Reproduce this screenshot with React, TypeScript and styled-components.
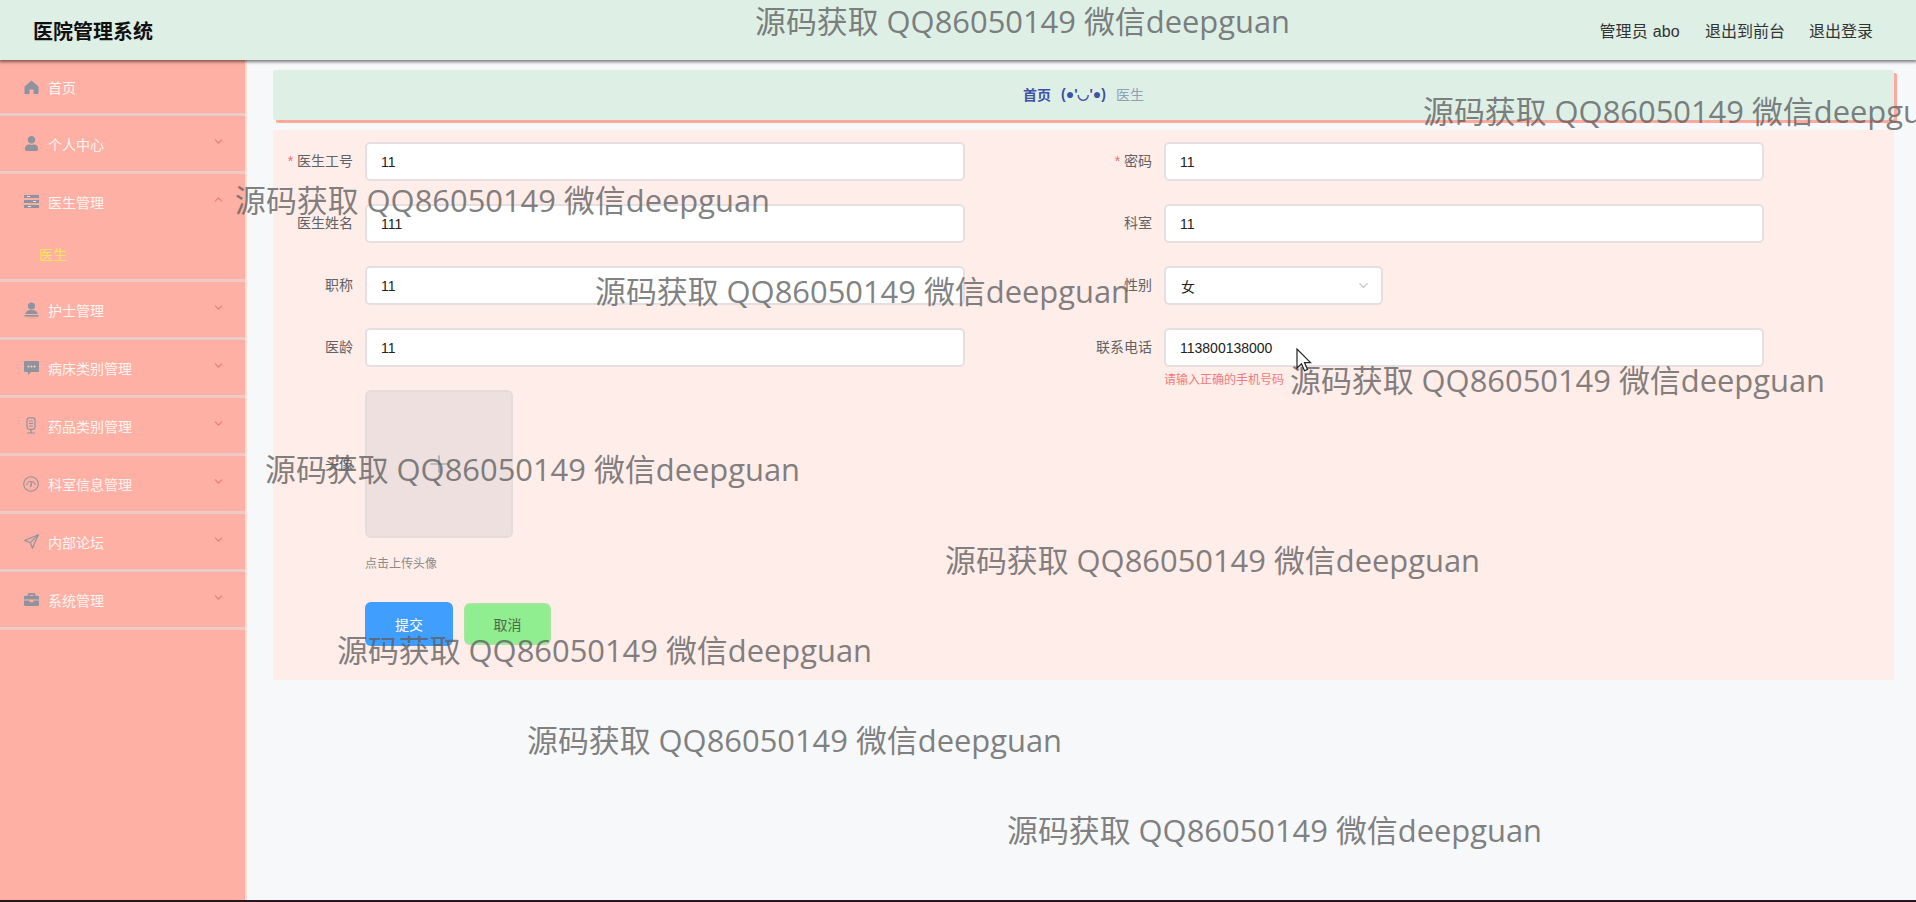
import React from 'react';
import styled, { createGlobalStyle } from 'styled-components';
import { FaUser, FaBriefcase } from 'react-icons/fa';
import { ChevronDown, ChevronUp, Plus } from 'lucide-react';

const FONT = `"Liberation Sans", "Noto Sans CJK SC", sans-serif`;

const GlobalStyle = createGlobalStyle`
  html, body {
    margin: 0;
    padding: 0;
    height: 100%;
    overflow: hidden;
    font-family: ${FONT};
  }
  * { box-sizing: border-box; }
`;

const Page = styled.div`
  position: relative;
  display: flex;
  flex-direction: column;
  height: 902px;
  overflow: hidden;
  background: #f7f8fa;
`;

const TopBar = styled.header`
  position: relative;
  z-index: 2;
  display: flex;
  align-items: center;
  justify-content: space-between;
  flex: none;
  height: 60px;
  padding: 0 43px 0 33px;
  background: #deefe6;
  box-shadow: 0 1px 3px 1px #00000080;
`;

const Title = styled.h1`
  margin: 0;
  font-size: 20px;
  font-weight: 700;
  color: #111;
`;

const TopLinks = styled.nav`
  display: flex;
  align-items: center;
  gap: 24px;
  font-size: 16px;
  color: #333;
`;

const AdminName = styled.span`
  margin-right: 1px;
  letter-spacing: 0.2px;
`;

const Body = styled.div`
  display: flex;
  flex: 1;
  min-height: 0;
`;

const Sidebar = styled.aside`
  flex: none;
  width: 247px;
  background: #ffb0a4;
  border-right: 2px solid #fbdcd7;
`;

const MenuHead = styled.div<{ $first?: boolean }>`
  display: flex;
  align-items: center;
  height: ${p => (p.$first ? '53px' : '55px')};
  padding-left: 23px;
  padding-right: 20px;
  font-size: 14px;
  color: #fff4f0;
`;

const MenuItem = styled.div`
  border-bottom: 3px solid #eec9c6;
`;

const MenuIcon = styled.span`
  display: flex;
  align-items: center;
  justify-content: center;
  width: 16px;
  height: 16px;
  margin-right: 9px;
  font-size: 15px;
  color: #8f939e;
`;

const MenuLabel = styled.span`
  flex: 1;
`;

const MenuArrow = styled.span`
  display: flex;
  margin-top: -4px;
  color: #ea7a72;
`;

const SubItem = styled.div`
  display: flex;
  align-items: center;
  height: 50px;
  padding-left: 39px;
  font-size: 14px;
  color: #ffe45c;
`;

const Main = styled.main`
  flex: 1;
  min-width: 0;
  padding: 10px 22px 0 26px;
`;

const Crumb = styled.div`
  display: flex;
  align-items: center;
  justify-content: center;
  gap: 10px;
  height: 50px;
  padding-bottom: 2px;
  font-size: 14px;
  background: #deefe6;
  box-shadow: 3px 3px 0 #ffa89c;
  border-radius: 2px;
`;

const CrumbLink = styled.span`
  font-weight: 700;
  color: #3f51a5;
`;

const CrumbCurrent = styled.span`
  color: #8fa0b5;
`;

const FormPanel = styled.form`
  display: grid;
  grid-template-columns: 799px 1fr;
  align-content: start;
  height: 550px;
  margin-top: 10px;
  padding-top: 12px;
  background: #ffede9;
`;

const Field = styled.div`
  position: relative;
  display: flex;
  align-items: flex-start;
  height: 62px;
`;

const FieldLabel = styled.label<{ $required?: boolean }>`
  flex: none;
  width: 92px;
  height: 38px;
  padding-right: 12px;
  line-height: 38px;
  text-align: right;
  font-size: 14px;
  color: #606266;
  &::before {
    content: ${p => (p.$required ? `'* '` : `''`)};
    color: #f56c6c;
  }
`;

const TextInput = styled.input`
  width: 600px;
  height: 39px;
  padding: 0 14px;
  border: 2px solid #e6dfe1;
  border-radius: 5px;
  outline: none;
  background: #fff;
  font-family: ${FONT};
  font-size: 14px;
  color: #222;
`;

const SelectBox = styled.div`
  display: flex;
  align-items: center;
  justify-content: space-between;
  width: 219px;
  height: 39px;
  padding: 0 10px 0 15px;
  border: 2px solid #e6dfe1;
  border-radius: 5px;
  background: #fff;
  font-size: 14px;
  color: #222;
`;

const ErrorText = styled.div`
  position: absolute;
  left: 92px;
  top: 42px;
  font-size: 12px;
  color: #ef7b7b;
`;

const UploadBlock = styled.div`
  grid-column: 1 / -1;
  display: flex;
  align-items: center;
  height: 148px;
`;

const UploadBox = styled.div`
  display: flex;
  align-items: center;
  justify-content: center;
  width: 148px;
  height: 148px;
  border: 2px solid #e6dcdc;
  border-radius: 6px;
  background: #eee0de;
  color: #8c939d;
`;

const UploadHint = styled.div`
  grid-column: 1 / -1;
  padding-left: 92px;
  margin-top: 19px;
  font-size: 12px;
  line-height: 14px;
  color: #8a8a8a;
`;

const Actions = styled.div`
  grid-column: 1 / -1;
  display: flex;
  align-items: flex-start;
  gap: 11px;
  padding-left: 92px;
  margin-top: 31px;
`;

const Button = styled.button<{ $kind: 'primary' | 'cancel' }>`
  width: ${p => (p.$kind === 'primary' ? '88px' : '87px')};
  height: ${p => (p.$kind === 'primary' ? '44px' : '42px')};
  margin-top: ${p => (p.$kind === 'primary' ? '0' : '1px')};
  border: ${p => (p.$kind === 'primary' ? 'none' : '2px solid #a5e5a0')};
  border-radius: 6px;
  font-family: ${FONT};
  font-size: 14px;
  color: ${p => (p.$kind === 'primary' ? '#fff' : '#4a6a4a')};
  background: ${p => (p.$kind === 'primary' ? '#409eff' : '#90ee90')};
`;

const BottomEdge = styled.div`
  flex: none;
  height: 2px;
  background: #2a1420;
`;

const Watermark = styled.div<{ $x: number; $y: number }>`
  position: absolute;
  z-index: 5;
  left: ${p => p.$x}px;
  top: ${p => p.$y}px;
  white-space: nowrap;
  pointer-events: none;
  font-family: "Open Sans", "Noto Sans CJK SC", sans-serif;
  font-size: 30.9px;
  line-height: 40px;
  color: #5f5f5f;
  opacity: 0.78;
`;

const Cursor = styled.svg`
  position: absolute;
  z-index: 6;
  left: 1296px;
  top: 348px;
`;

const HomeIcon = () => (
  <svg width="15" height="14" viewBox="0 0 15 14" fill="currentColor">
    <path d="M7.5 0.5 14.5 6.5V14H9.5V9.5H5.5V14H0.5V6.5z" />
  </svg>
);

const ListIcon = () => (
  <svg width="15" height="13" viewBox="0 0 15 13" fill="currentColor">
    <rect x="0" y="0" width="15" height="3" />
    <rect x="0" y="5" width="15" height="3" />
    <rect x="0" y="10" width="15" height="3" />
    <rect x="3" y="1" width="3" height="1" fill="#ffe0da" />
    <rect x="9" y="6" width="3" height="1" fill="#ffe0da" />
    <rect x="4" y="11" width="3" height="1" fill="#ffe0da" />
  </svg>
);

const NurseIcon = () => (
  <svg width="15" height="15" viewBox="0 0 15 15" fill="currentColor">
    <circle cx="7.5" cy="4" r="3.6" />
    <path d="M1.5 12c0-3 2.6-4 6-4s6 1 6 4z" />
    <rect x="0.5" y="13" width="14" height="1.6" />
  </svg>
);

const ChatIcon = () => (
  <svg width="15" height="15" viewBox="0 0 15 15" fill="currentColor">
    <path d="M1 1h13a1 1 0 0 1 1 1v9a1 1 0 0 1-1 1H7l-3 3v-3H1a1 1 0 0 1-1-1V2a1 1 0 0 1 1-1z" />
    <circle cx="4.5" cy="6.5" r="1" fill="#ffd5cd" />
    <circle cx="7.5" cy="6.5" r="1" fill="#ffd5cd" />
    <circle cx="10.5" cy="6.5" r="1" fill="#ffd5cd" />
  </svg>
);

const MicIcon = () => (
  <svg width="12" height="17" viewBox="0 0 12 17" fill="none" stroke="currentColor" strokeWidth="1.2">
    <rect x="2" y="0.8" width="8" height="11.5" rx="2.2" />
    <path d="M4 4h4M4 6.5h4M4 9h4M6 12.5v3M2 16h8" />
  </svg>
);

const GaugeIcon = () => (
  <svg width="16" height="16" viewBox="0 0 16 16" fill="none" stroke="currentColor">
    <circle cx="8" cy="8" r="7.3" strokeWidth="1.1" />
    <path d="M3.5 9a4.6 4.6 0 0 1 9 0" strokeWidth="1" />
    <path d="M8.6 6.5 7.5 11" strokeWidth="1.4" />
  </svg>
);

const SendIcon = () => (
  <svg width="15" height="15" viewBox="0 0 15 15" fill="none" stroke="currentColor" strokeWidth="1.2" strokeLinejoin="round">
    <path d="M14.3 0.7 0.7 6.5l5.6 2.2 2.2 5.6z" />
    <path d="M14.3 0.7 6.3 8.7" />
  </svg>
);

const menus = [
  { label: '首页', icon: <HomeIcon />, first: true },
  { label: '个人中心', icon: <FaUser /> },
  { label: '医生管理', icon: <ListIcon />, open: true, subs: ['医生'] },
  { label: '护士管理', icon: <NurseIcon /> },
  { label: '病床类别管理', icon: <ChatIcon /> },
  { label: '药品类别管理', icon: <MicIcon /> },
  { label: '科室信息管理', icon: <GaugeIcon /> },
  { label: '内部论坛', icon: <SendIcon /> },
  { label: '系统管理', icon: <FaBriefcase /> },
];

const watermarks = [
  [755, 1], [1423, 91], [235, 180], [595, 271], [1290, 360],
  [265, 449], [945, 540], [337, 630], [527, 720], [1007, 810],
];

const App: React.FC = () => (
  <>
    <GlobalStyle />
    <Page>
      <TopBar>
        <Title>医院管理系统</Title>
        <TopLinks>
          <AdminName>管理员 abo</AdminName>
          <span>退出到前台</span>
          <span>退出登录</span>
        </TopLinks>
      </TopBar>
      <Body>
        <Sidebar>
          {menus.map(menu => (
            <MenuItem key={menu.label}>
              <MenuHead $first={menu.first}>
                <MenuIcon>{menu.icon}</MenuIcon>
                <MenuLabel>{menu.label}</MenuLabel>
                {!menu.first && (
                  <MenuArrow>
                    {menu.open ? <ChevronUp size={13} /> : <ChevronDown size={13} />}
                  </MenuArrow>
                )}
              </MenuHead>
              {menu.subs?.map(sub => <SubItem key={sub}>{sub}</SubItem>)}
            </MenuItem>
          ))}
        </Sidebar>
        <Main>
          <Crumb>
            <CrumbLink>首页</CrumbLink>
            <CrumbLink>(●'◡'●)</CrumbLink>
            <CrumbCurrent>医生</CrumbCurrent>
          </Crumb>
          <FormPanel>
            <Field>
              <FieldLabel $required>医生工号</FieldLabel>
              <TextInput readOnly value="11" />
            </Field>
            <Field>
              <FieldLabel $required>密码</FieldLabel>
              <TextInput readOnly value="11" />
            </Field>
            <Field>
              <FieldLabel>医生姓名</FieldLabel>
              <TextInput readOnly value="111" />
            </Field>
            <Field>
              <FieldLabel>科室</FieldLabel>
              <TextInput readOnly value="11" />
            </Field>
            <Field>
              <FieldLabel>职称</FieldLabel>
              <TextInput readOnly value="11" />
            </Field>
            <Field>
              <FieldLabel>性别</FieldLabel>
              <SelectBox>
                女
                <ChevronDown size={15} color="#c0c4cc" />
              </SelectBox>
            </Field>
            <Field>
              <FieldLabel>医龄</FieldLabel>
              <TextInput readOnly value="11" />
            </Field>
            <Field>
              <FieldLabel>联系电话</FieldLabel>
              <TextInput readOnly value="113800138000" />
              <ErrorText>请输入正确的手机号码</ErrorText>
            </Field>
            <UploadBlock>
              <FieldLabel>头像</FieldLabel>
              <UploadBox>
                <Plus size={28} strokeWidth={1} />
              </UploadBox>
            </UploadBlock>
            <UploadHint>点击上传头像</UploadHint>
            <Actions>
              <Button type="button" $kind="primary">提交</Button>
              <Button type="button" $kind="cancel">取消</Button>
            </Actions>
          </FormPanel>
        </Main>
      </Body>
      <BottomEdge />
      {watermarks.map(([x, y]) => (
        <Watermark key={x} $x={x} $y={y}>源码获取 QQ86050149 微信deepguan</Watermark>
      ))}
      <Cursor width="16" height="24" viewBox="0 0 16 24">
        <path d="M1 1v19l4.5-4.3 3 7 3-1.3-3-6.8h6z" fill="#fff" stroke="#222" strokeWidth="1.2" />
      </Cursor>
    </Page>
  </>
);

export default App;
